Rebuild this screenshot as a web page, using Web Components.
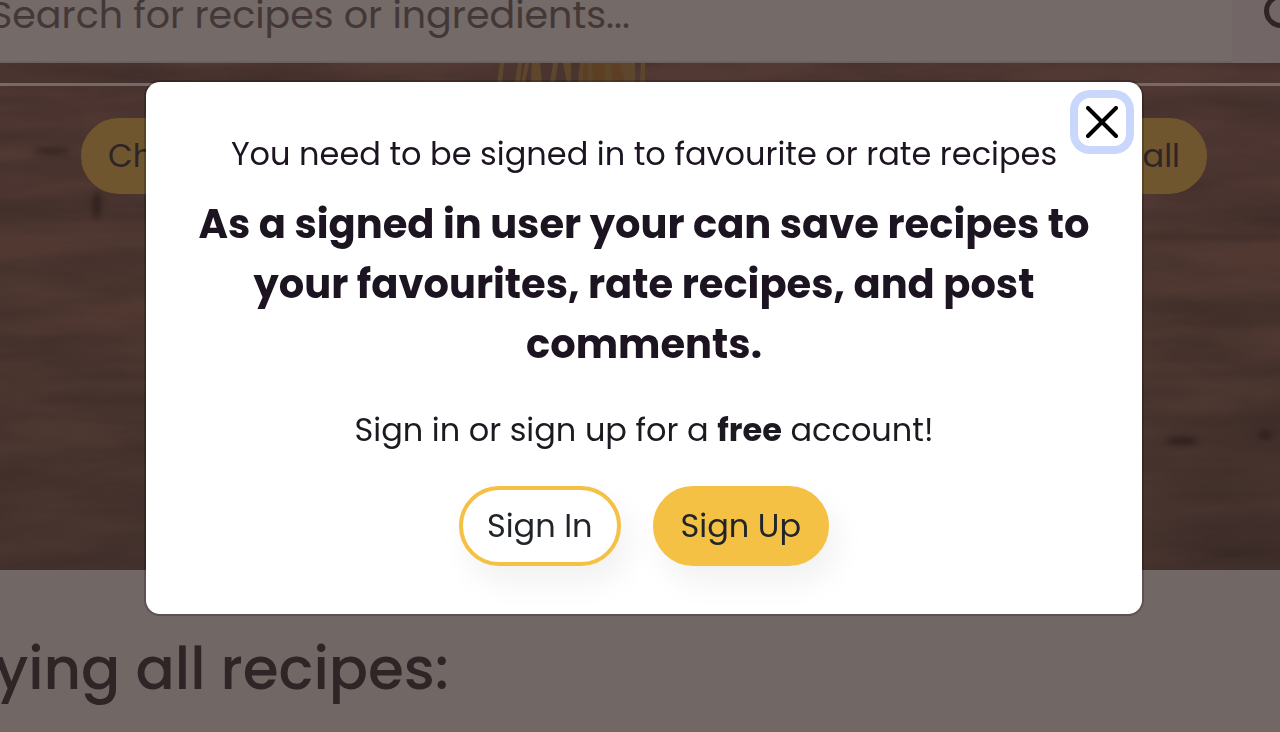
<!DOCTYPE html>
<html lang="en">
<head>
<meta charset="utf-8">
<meta name="viewport" content="width=device-width, initial-scale=1">
<title>Recipes</title>
<style>
html, body { margin: 0; min-height: 100%; }
body { background: #e3cecb; color: #5e484c; font-family: Poppins, Inter, sans-serif; font-feature-settings: "cv11"; overflow: hidden; }
</style>
</head>
<body>
<recipe-page>
  <search-bar></search-bar>
  <hero-banner>
    <pill-button variant="muted">Ch</pill-button>
    <pill-button variant="muted">all</pill-button>
  </hero-banner>
  <results-heading>Displaying all recipes:</results-heading>
</recipe-page>
<sign-in-modal>
  <span slot="lead">You need to be signed in to favourite or rate recipes</span>
  <span slot="title">As a signed in user your can save recipes to your favourites, rate recipes, and post comments.</span>
  <span slot="offer">Sign in or sign up for a <strong>free</strong> account!</span>
  <pill-button slot="actions" variant="outline">Sign In</pill-button>
  <pill-button slot="actions" variant="solid">Sign Up</pill-button>
</sign-in-modal>
<script>
function define(name, html) {
  const template = document.createElement('template');
  template.innerHTML = html;
  customElements.define(name, class extends HTMLElement {
    constructor() {
      super();
      this.attachShadow({ mode: 'open' }).append(template.content.cloneNode(true));
    }
  });
}

define('recipe-page', `
<style>:host { display: flex; flex-direction: column; overflow: hidden; min-height: 100vh; }</style>
<slot></slot>`);

define('search-bar', `
<style>
:host { display: flex; height: 63px; background: #e8d4ce; overflow: hidden; }
form { display: flex; flex: 1; margin: 0; }
input { flex: 1; min-width: 0; box-sizing: border-box; margin: 0 0 0 -48px; padding: 0 0 32px 38px; border: 0; border-bottom: 2px solid #d6c6c6; border-radius: 0; background: none; font: inherit; font-size: 38px; line-height: 40px; color: #5e484c; outline: 0; }
input::placeholder { color: #86716e; opacity: 1; }
button { flex: none; width: 48px; padding: 0 0 0 30px; border: 0; background: #e4cfcc; overflow: hidden; color: #5e484c; }
svg { display: block; width: 48px; height: 48px; margin-top: -32px; }
</style>
<form role="search">
  <input type="text" aria-label="Search recipes" placeholder="Search for recipes or ingredients...">
  <button type="button" aria-label="Search"><svg viewBox="0 0 48 48" fill="none" stroke="currentColor" stroke-width="5" stroke-linecap="round"><circle cx="19" cy="19" r="14.5"/><path d="M30 30l14 14"/></svg></button>
</form>`);

define('hero-banner', `
<style>
:host { display: grid; height: 507px; background: #96695d; overflow: hidden; }
svg, .content { grid-area: 1 / 1; min-height: 0; }
svg { width: 100%; height: 100%; display: block; }
.content { position: relative; }
hr { margin: 20px 0 32px; border: 0; height: 3px; background: #ead4ce; }
nav { display: flex; justify-content: space-between; padding: 0 73px 0 81px; }
</style>
<svg aria-hidden="true" viewBox="0 0 1280 507" preserveAspectRatio="none">
  <defs>
    <linearGradient id="shade" x2="0" y2="1"><stop offset="0" stop-color="#a67369"/><stop offset=".5" stop-color="#a27264"/><stop offset="1" stop-color="#90695f"/></linearGradient>
    <filter id="grain" x="0" y="0" width="100%" height="100%" color-interpolation-filters="sRGB">
      <feTurbulence type="fractalNoise" baseFrequency=".006 .03" numOctaves="5" seed="8"/>
      <feColorMatrix values="0 0 0 0 .38  0 0 0 0 .28  0 0 0 0 .26  .9 0 0 0 -.25"/>
    </filter>
    <filter id="soft" x="-50%" y="-50%" width="200%" height="200%"><feGaussianBlur stdDeviation="3"/></filter>
  </defs>
  <rect width="1280" height="507" fill="url(#shade)"/>
  <rect width="1280" height="507" filter="url(#grain)"/>
  <g filter="url(#soft)" fill="#4d3632" opacity=".75">
    <ellipse cx="97" cy="142" rx="4" ry="14"/><ellipse cx="52" cy="88" rx="18" ry="3"/>
    <ellipse cx="1182" cy="378" rx="16" ry="4"/><ellipse cx="1265" cy="372" rx="8" ry="4"/>
    <rect x="1145" y="173" width="135" height="2"/>
  </g>
  <g fill="#ba8d58">
    <path d="M500 0h4l-2 20h-5zM518 0h4l-2 20h-5zM525 0h4l-4 20h-4zM532 0h8l2 20h-11zM553 0h5l-3 20h-5zM563 0h8v20h-4zM580 0h55v20h-57zM641 0h4v20h-5z"/>
    <path fill="#bb8147" d="M583 0h5v20h-5zM592 0h13v20h-12zM611 0h9l5 20h-13z"/>
  </g>
</svg>
<div class="content"><hr><nav><slot></slot></nav></div>`);

define('results-heading', `
<style>
:host { display: flex; justify-content: flex-end; width: 449px; padding-top: 57px; }
h1 { margin: 0; font-size: 58px; line-height: 84px; font-weight: 500; white-space: nowrap; }
</style>
<h1><slot></slot></h1>`);

define('pill-button', `
<style>
:host { display: block; }
button { box-sizing: border-box; height: 80px; border: 4px solid #f4c145; border-radius: 40px; padding: 0 24px; background: #f4c145; color: #212529; font: inherit; font-feature-settings: inherit; font-size: 32px; line-height: 48px; box-shadow: 8px 16px 32px rgba(0, 0, 0, .06); white-space: nowrap; }
:host([variant="outline"]) button { background: #fff; }
:host([variant="muted"]) button { height: 76px; border-color: #e0ac5e; background: #e0ac5e; color: #5e484c; box-shadow: none; min-width: 160px; padding: 0 23px; text-align: left; }
:host([variant="muted"]:last-child) button { text-align: right; }
</style>
<button type="button"><slot></slot></button>`);

define('sign-in-modal', `
<style>
:host { position: fixed; inset: 0; box-sizing: border-box; padding: 82px 138px 16px 146px; background: rgba(0, 0, 0, .5); overflow: auto; }
dialog { position: relative; display: flex; flex-direction: column; align-items: center; box-sizing: border-box; width: 100%; margin: 0; padding: 48px 40px; border: 0; border-radius: 14px; background: #fff; color: #1c1420; box-shadow: 0 0 0 2px rgba(0, 0, 0, .2); text-align: center; }
p { margin: 0; font-size: 32px; line-height: 48px; }
h2 { margin: 16px 0 32px; font-size: 40px; line-height: 60px; font-weight: 700; }
.offer { color: #1c1a20; }
.actions { display: flex; gap: 32px; margin-top: 32px; }
.close { position: absolute; top: 16px; right: 16px; display: grid; place-items: center; width: 48px; height: 48px; padding: 0; border: 0; border-radius: 12px; background: #fff; color: #000; box-shadow: 0 0 0 8px #c9d7fc; }
.close svg { width: 32px; height: 32px; }
</style>
<dialog open aria-labelledby="title">
  <button class="close" type="button" aria-label="Close"><svg viewBox="0 0 32 32" fill="none" stroke="currentColor" stroke-width="4" stroke-linecap="round"><path d="M2 2l28 28M30 2L2 30"/></svg></button>
  <p><slot name="lead"></slot></p>
  <h2 id="title"><slot name="title"></slot></h2>
  <p class="offer"><slot name="offer"></slot></p>
  <div class="actions"><slot name="actions"></slot></div>
</dialog>`);
</script>
</body>
</html>
